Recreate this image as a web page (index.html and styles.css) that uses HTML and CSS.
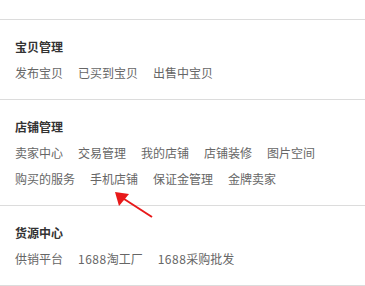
FILE: index.html
```html
<!DOCTYPE html>
<html lang="zh-CN">
<head>
<meta charset="utf-8">
<title>卖家菜单</title>
<link rel="stylesheet" href="styles.css">
</head>
<body>
<div class="menu">
  <section class="group">
    <h3 class="title">宝贝管理</h3>
    <div class="links">
      <a>发布宝贝</a><a>已买到宝贝</a><a>出售中宝贝</a>
    </div>
  </section>
  <section class="group">
    <h3 class="title">店铺管理</h3>
    <div class="links">
      <a>卖家中心</a><a>交易管理</a><a>我的店铺</a><a>店铺装修</a><a>图片空间</a>
    </div>
    <div class="links">
      <a>购买的服务</a><a>手机店铺</a><a>保证金管理</a><a>金牌卖家</a>
    </div>
  </section>
  <section class="group">
    <h3 class="title">货源中心</h3>
    <div class="links">
      <a>供销平台</a><a><span class="num">1688</span>淘工厂</a><a><span class="num">1688</span>采购批发</a>
    </div>
  </section>
</div>
<svg class="arrow" width="365" height="286" viewBox="0 0 365 286">
  <line x1="152" y1="217" x2="121" y2="197" stroke="#e8191a" stroke-width="2"/>
  <polygon points="115,192 129,194 119,206" fill="#e8191a"/>
</svg>
</body>
</html>
```
FILE: styles.css
```css
html, body {
  margin: 0;
  padding: 0;
  background: #fff;
}
body {
  position: relative;
  width: 365px;
  height: 286px;
  overflow: hidden;
  font-family: "Noto Sans CJK SC", "Liberation Sans", sans-serif;
  font-size: 12px;
}
.menu {
  margin-top: 19px;
  border-bottom: 1px solid #dcdcdc;
}
.group {
  border-top: 1px solid #dcdcdc;
  padding: 14px 15px 13px;
}
.title {
  margin: 0;
  font-size: 12px;
  font-weight: bold;
  line-height: 26px;
  color: #333;
}
.links {
  display: flex;
  gap: 15px;
  line-height: 26px;
  white-space: nowrap;
}
.links a {
  color: #666;
  text-decoration: none;
}
.num {
  letter-spacing: 0.5px;
}
.arrow {
  position: absolute;
  left: 0;
  top: 0;
  pointer-events: none;
}
```
